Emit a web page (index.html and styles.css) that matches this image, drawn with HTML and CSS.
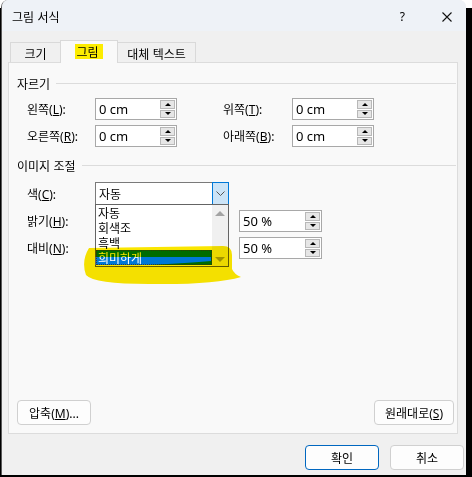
FILE: index.html
```html
<!DOCTYPE html>
<html lang="ko">
<head>
<meta charset="utf-8">
<title>그림 서식</title>
<link rel="stylesheet" href="styles.css">
</head>
<body>
<div class="dialog">
  <div class="titlebar">
    <span class="title">그림 서식</span>
    <span class="help">?</span>
    <svg class="close" width="10" height="10" viewBox="0 0 10 10"><path d="M0.5 0.5 L9.5 9.5 M9.5 0.5 L0.5 9.5" stroke="#111" stroke-width="1.1" fill="none"/></svg>
  </div>
  <div class="tabs">
    <div class="tab first">크기</div>
    <div class="tab active"><span class="mark">그림</span></div>
    <div class="tab last">대체 텍스트</div>
  </div>
  <div class="panel">
    <div class="group-title"><span>자르기</span><i class="rule"></i></div>
    <div class="crop">
      <div class="row">
        <span class="lbl">왼쪽(<u>L</u>):</span>
        <div class="spin"><span class="val">0 cm</span><span class="btns"><span class="up"></span><span class="down"></span></span></div>
        <span class="lbl lbl2">위쪽(<u>T</u>):</span>
        <div class="spin"><span class="val">0 cm</span><span class="btns"><span class="up"></span><span class="down"></span></span></div>
      </div>
      <div class="row">
        <span class="lbl">오른쪽(<u>R</u>):</span>
        <div class="spin"><span class="val">0 cm</span><span class="btns"><span class="up"></span><span class="down"></span></span></div>
        <span class="lbl lbl2">아래쪽(<u>B</u>):</span>
        <div class="spin"><span class="val">0 cm</span><span class="btns"><span class="up"></span><span class="down"></span></span></div>
      </div>
    </div>
    <div class="group-title g2"><span>이미지 조절</span><i class="rule"></i></div>
    <div class="adjust">
      <div class="row">
        <span class="lbl">색(<u>C</u>):</span>
        <div class="combo">
          <span class="val">자동</span>
          <span class="drop"><svg width="9" height="5" viewBox="0 0 9 5"><path d="M0.5 0.5 L4.5 4.5 L8.5 0.5" stroke="#555" stroke-width="1" fill="none"/></svg></span>
          <div class="list">
            <div class="items">
              <div class="item">자동</div>
              <div class="item">회색조</div>
              <div class="item">흑백</div>
              <div class="item sel">희미하게</div>
            </div>
            <div class="scroll"><i class="arr-up"></i><i class="arr-down"></i></div>
          </div>
          <svg class="marker" width="165" height="45" viewBox="0 0 165 45"><path fill-rule="evenodd" fill="#fae600" d="M10,6 L144,4 Q153,4 153,13 L153,27 Q155,32 162,35 Q135,43 70,42 Q15,42 7,33 Q2,19 10,6 Z M16,15 L132,15 L132,19 Q110,21 70,23 L16,23 Z"/></svg>
        </div>
      </div>
      <div class="row">
        <span class="lbl">밝기(<u>H</u>):</span>
        <div class="spin pct"><span class="val">50 %</span><span class="btns"><span class="up"></span><span class="down"></span></span></div>
      </div>
      <div class="row">
        <span class="lbl">대비(<u>N</u>):</span>
        <div class="spin pct"><span class="val">50 %</span><span class="btns"><span class="up"></span><span class="down"></span></span></div>
      </div>
    </div>
    <div class="panel-buttons">
      <button class="btn compress">압축(<u>M</u>)...</button>
      <button class="btn reset">원래대로(<u>S</u>)</button>
    </div>
  </div>
  <div class="footer">
    <button class="btn ok">확인</button>
    <button class="btn cancel">취소</button>
  </div>
</div>
</body>
</html>
```

FILE: styles.css
```css
* { box-sizing: border-box; }
html, body { margin: 0; padding: 0; }
body {
  width: 472px;
  height: 477px;
  overflow: hidden;
  background: linear-gradient(#ffffff 0 8px, #000000 8px);
  font-family: "Noto Sans", "Noto Sans CJK KR", sans-serif;
  font-size: 12px;
  color: #000;
}
u { text-decoration: underline; text-underline-offset: 1px; }

.dialog {
  width: 465px;
  height: 475px;
  margin-left: 1px;
  background: #f0f0f0;
  border-left: 1px solid #5a5a5a;
  border-radius: 7px 7px 0 0;
  overflow: hidden;
  display: flex;
  flex-direction: column;
}

.titlebar {
  height: 31px;
  flex: none;
  background: #eef2f7;
  display: flex;
  align-items: center;
  padding-left: 10px;
  padding-top: 2px;
}
.title { font-family: "Noto Sans CJK KR", sans-serif; font-size: 12px; }
.help { margin-left: auto; font-size: 12px; font-family: "Noto Sans", sans-serif; }
.close { margin-left: 37px; margin-right: 14px; }

.tabs {
  display: flex;
  align-items: flex-end;
  margin-top: 9px;
  padding-left: 8px;
  height: 22px;
  position: relative;
  z-index: 2;
}
.tab {
  height: 20px;
  border: 1px solid #d9d9d9;
  border-bottom: none;
  background: #f0f0f0;
  display: flex;
  align-items: center;
  justify-content: center;
  font-family: "Noto Sans CJK KR", sans-serif;
  padding-top: 1px;
}
.tab.first { width: 50px; border-right: none; }
.tab.active {
  width: 58px;
  height: 23px;
  margin-bottom: -1px;
  background: #f9f9f9;
  padding-bottom: 3px;
}
.tab.last { width: 78px; border-left: none; }
.mark {
  background: #fcec00;
  line-height: 15px;
  padding: 0 4px 0 1px;
}

.panel {
  width: 450px;
  height: 372px;
  margin-left: 6px;
  background: #f9f9f9;
  border: 1px solid #dcdcdc;
  padding: 12px 1px 8px 8px;
  display: flex;
  flex-direction: column;
}
.group-title {
  display: flex;
  align-items: center;
  height: 16px;
  gap: 6px;
  font-family: "Noto Sans CJK KR", sans-serif;
}
.group-title .rule { flex: 1; height: 1px; background: #dcdcdc; }
.group-title.g2 { margin-top: 10px; }

.crop { margin-top: 7px; padding-left: 10px; display: flex; flex-direction: column; gap: 5px; }
.adjust { margin-top: 9px; padding-left: 10px; display: flex; flex-direction: column; gap: 5px; }
.row { display: flex; align-items: center; }
.lbl { width: 68px; flex: none; }
.lbl2 { width: 69px; margin-left: 46px; }

.spin {
  width: 82px;
  height: 22px;
  border: 1px solid #a8a8a8;
  background: #fff;
  display: flex;
  flex: none;
}
.spin.pct { width: 83px; margin-left: 144px; }
.spin .val {
  flex: 1;
  padding-left: 3px;
  font-size: 13px;
  line-height: 20px;
  font-family: "Noto Sans", sans-serif;
}
.btns {
  width: 16px;
  display: flex;
  flex-direction: column;
  gap: 1px;
  padding: 1px 1px 1px 0;
}
.btns span {
  flex: 1;
  background: #e6e6e6;
  border: 1px solid #b8b8b8;
  display: flex;
  align-items: center;
  justify-content: center;
}
.btns .up::after {
  content: "";
  border-left: 3px solid transparent;
  border-right: 3px solid transparent;
  border-bottom: 3px solid #000;
}
.btns .down::after {
  content: "";
  border-left: 3px solid transparent;
  border-right: 3px solid transparent;
  border-top: 3px solid #000;
}

.combo {
  position: relative;
  width: 134px;
  height: 23px;
  border: 1px solid #7a7a7a;
  background: #fff;
  display: flex;
  flex: none;
}
.combo .val { flex: 1; padding-left: 3px; line-height: 21px; font-family: "Noto Sans CJK KR", sans-serif; }
.combo .drop {
  width: 17px;
  margin: -1px -1px -1px 0;
  border: 1px solid #0078d7;
  background: #cce4f7;
  display: flex;
  align-items: center;
  justify-content: center;
}
.list {
  position: absolute;
  top: 21px;
  left: -1px;
  width: 134px;
  height: 63px;
  border: 1px solid #646464;
  background: #fff;
  display: flex;
  z-index: 3;
}
.items { flex: 1; padding-top: 0; }
.item {
  height: 15px;
  line-height: 15px;
  padding-left: 2px;
  font-family: "Noto Sans CJK KR", sans-serif;
}
.item.sel {
  background: #0078d7;
  color: #fff;
  outline: 1px dotted #3a3a3a;
  outline-offset: -1px;
}
.scroll {
  width: 16px;
  background: #f0f0f0;
  display: flex;
  flex-direction: column;
  align-items: center;
  justify-content: space-between;
  padding: 6px 0 4px;
}
.arr-up {
  border-left: 5px solid transparent;
  border-right: 5px solid transparent;
  border-bottom: 5px solid #a3a3a3;
}
.arr-down {
  border-left: 5px solid transparent;
  border-right: 5px solid transparent;
  border-top: 5px solid #a3a3a3;
}
.marker {
  position: absolute;
  left: -17px;
  top: 59px;
  z-index: 4;
  mix-blend-mode: multiply;
  pointer-events: none;
}

.btn {
  height: 25px;
  background: #fdfdfd;
  border: 1px solid #d0d0d0;
  border-radius: 4px;
  font-family: "Noto Sans", "Noto Sans CJK KR", sans-serif;
  font-size: 12px;
  color: #000;
  padding: 0;
}
.panel-buttons {
  margin-top: auto;
  display: flex;
  justify-content: space-between;
  padding-right: 2px;
}
.compress { width: 74px; }
.reset { width: 80px; }

.footer {
  display: flex;
  justify-content: flex-end;
  gap: 11px;
  margin-top: 11px;
  padding-right: 2px;
}
.ok { width: 74px; border-color: #0067c0; }
.cancel { width: 74px; }
```
